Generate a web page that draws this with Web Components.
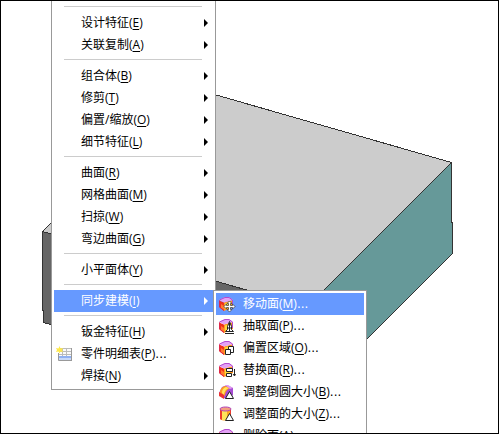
<!DOCTYPE html>
<html lang="zh-CN">
<head>
<meta charset="utf-8">
<title>插入菜单</title>
<style>
html, body { margin: 0; height: 100%; }
body { font: 12px/22px "Open Sans", "Noto Sans CJK SC", sans-serif; color: #000; }
</style>
</head>
<body>
<cad-window>
  <model-view></model-view>
  <cad-menu slot="menu" class="main" aria-label="插入">
    <menu-line></menu-line>
    <menu-entry label="设计特征" key="E" more></menu-entry>
    <menu-entry label="关联复制" key="A" more></menu-entry>
    <menu-line></menu-line>
    <menu-entry label="组合体" key="B" more></menu-entry>
    <menu-entry label="修剪" key="T" more></menu-entry>
    <menu-entry label="偏置/缩放" key="O" more></menu-entry>
    <menu-entry label="细节特征" key="L" more></menu-entry>
    <menu-line></menu-line>
    <menu-entry label="曲面" key="R" more></menu-entry>
    <menu-entry label="网格曲面" key="M" more></menu-entry>
    <menu-entry label="扫掠" key="W" more></menu-entry>
    <menu-entry label="弯边曲面" key="G" more></menu-entry>
    <menu-line></menu-line>
    <menu-entry label="小平面体" key="Y" more></menu-entry>
    <menu-line></menu-line>
    <menu-entry label="同步建模" key="I" more active>
      <cad-menu class="sub" aria-label="同步建模">
        <menu-entry label="移动面" key="M" dots icon="move" active></menu-entry>
        <menu-entry label="抽取面" key="P" dots icon="pull"></menu-entry>
        <menu-entry label="偏置区域" key="O" dots icon="offset"></menu-entry>
        <menu-entry label="替换面" key="R" dots icon="replace"></menu-entry>
        <menu-entry label="调整倒圆大小" key="B" dots icon="blend"></menu-entry>
        <menu-entry label="调整面的大小" key="Z" dots icon="resize"></menu-entry>
        <menu-entry label="删除面" key="A" dots icon="delete"></menu-entry>
      </cad-menu>
    </menu-entry>
    <menu-line></menu-line>
    <menu-entry label="钣金特征" key="H" more></menu-entry>
    <menu-entry label="零件明细表" key="P" dots icon="table"></menu-entry>
    <menu-entry label="焊接" key="N" more></menu-entry>
  </cad-menu>
</cad-window>
<script>
const build = (host, html) => {
  const t = document.createElement('template');
  t.innerHTML = html;
  const root = host.attachShadow({ mode: 'open' });
  root.append(t.content.cloneNode(true));
  return root;
};

const cube = `
  <path d="M1 5.500 6 7.500V16l-5-4z" fill="#f0301c"/>
  <path d="M3 9l3 2v4l-3-2z" fill="#ff7a2e"/>
  <path d="M6 7.500 15 5v7l-9 4z" fill="#ff9a1c"/>
  <path d="M7 8.500 12 7v5l-5 2z" fill="#ffd83c"/>
  <path d="M1 5 7 2h4l4 3-9 2.500z" fill="#e3a2f5"/>
  <path d="M1.500 5 7 2.500h4L14.500 5v6" fill="none" stroke="#b44ad0"/>
  <path d="M1.500 5.500v6.500L6 15.500" fill="none" stroke="#e02848"/>`;
const glyph = (d, fill = '#fff') => `<path d="${d}" fill="${fill}" stroke="#222"/>`;
const icons = {
  move: cube + `<path d="M11.500 6l2.500 2.500h-1.500v2h2V9L17 11.500 14.500 14v-1.500h-2v2H14L11.500 17 9 14.500h1.500v-2h-2V14L6 11.500 8.500 9v1.500h2v-2H9z" fill="#fff" stroke="#444" stroke-width=".8"/>`,
  pull: cube + glyph('M11.500 4.500 13.500 9.500v3l2 2h-8l2-2v-3z') + '<path d="M11.500 6v8M9 11h5M7 16.500h9" stroke="#222" fill="none"/>',
  offset: cube + glyph('M10.500 7.500h5v6h-5z') + glyph('M7.500 10.500h5v5h-5z'),
  replace: cube + glyph('M8.500 7.500h6v3h-6zM8.500 12.500h5v3h-5z') + '<path d="M16.500 8v6M15 13l1.500 2 1-2" stroke="#222" fill="none"/>',
  blend: `<path d="M1 10 4 4l5-2 6 3v7l-5 4-5-1z" fill="#a64bd4"/><path d="M2 10c0-4 2-6 5-7l6 2c-4 1-6 4-6 8z" fill="#ff9b20"/><path d="M4 10c0-3 1-5 4-6l3 1C8 6 6 9 6 12z" fill="#ffe45c"/><path d="M1 9l5 3v4l-5-3z" fill="#ee3430"/><path d="M7 2h3l5 3-3 1z" fill="#df9af0"/>` + glyph('M11.500 8.500 15.500 15.500h-8z'),
  resize: `<path d="M2 4v10c2 2 9 2 11 0V4z" fill="#ffa720"/><path d="M4 5h5v10H4z" fill="#ffe35a"/><path d="M2 4v10l2 1V5zM12 5h1v9h-1z" fill="#ed3b2d"/><ellipse cx="7.500" cy="4" rx="5.500" ry="2" fill="#f3a080" stroke="#b040b8"/>` + glyph('M11.500 8.500 15.500 15.500h-8z'),
  delete: cube + '<path d="M8 9l7 7M15 9l-7 7" stroke="#222" stroke-width="2"/>',
  table: `<path d="M3 3h13v12H3z" fill="#fafafa"/><path d="M3 11h13v2H3z" fill="#8fb0f2"/><path d="M3 13h13v2H3z" fill="#c7d8fa"/><path d="M3 3.500h13M3 6.500h13M3 9.500h13M6.500 3v8M10.500 3v8" stroke="#bbb" fill="none"/><path d="M15.500 3v12M2.500 8v7.500H16" stroke="#999" fill="none"/><path d="M3.500 1l1 2.500 2.500-.5-1 2 1 2-2.500-.5-1 2-1-2-2.500.5 1-2-1-2 2.500.5z" fill="#ffe94a"/>`
};

customElements.define('cad-window', class extends HTMLElement {
  constructor() {
    super();
    build(this, `<style>
      :host { display: block; position: relative; height: 100vh; overflow: hidden; background: #fff; }
      :host::after { content: ""; position: absolute; inset: 0; border: 1px solid #000; pointer-events: none; z-index: 5; }
      ::slotted(cad-menu) { position: absolute; left: 51px; top: 0; }
    </style><slot></slot><slot name="menu"></slot>`);
  }
});

customElements.define('model-view', class extends HTMLElement {
  constructor() {
    super();
    build(this, `<style>
      :host { display: block; height: 100%; }
      svg { display: block; width: 100%; height: 100%; }
    </style>
    <svg viewBox="0 0 499 434" preserveAspectRatio="xMinYMin meet" stroke="#333" shape-rendering="crispEdges" role="img" aria-label="三维实体">
      <path d="M42.500 231.500 190 87.500 451.500 162.500 300.500 313.500z" fill="#ccc"/>
      <path d="M42.500 231.500 304 306.500v91.500L43.500 322.500v-12h-1z" fill="#666"/>
      <path d="M451.500 162.500v60h1v31L304.500 402v-92.500z" fill="#699"/>
    </svg>`);
  }
});

customElements.define('cad-menu', class extends HTMLElement {
  constructor() {
    super();
    build(this, `<style>
      :host { display: block; box-sizing: border-box; background: #fff; border: 1px solid #999; padding: 2px; }
      :host(.main) { min-width: 165px; border-top: 0; padding-top: 3px; }
      :host(.sub) { min-width: 154px; }
    </style><div role="menu"><slot></slot></div>`);
  }
});

customElements.define('menu-line', class extends HTMLElement {
  constructor() {
    super();
    build(this, `<style>
      :host { display: block; padding: 3px 11px 5px 10px; }
      hr { margin: 0; border: 0; height: 1px; background: #ccc; }
    </style><hr>`);
  }
});

customElements.define('menu-entry', class extends HTMLElement {
  constructor() {
    super();
    const a = n => this.getAttribute(n);
    const icon = a('icon') ? `<svg viewBox="0 0 18 18" aria-hidden="true">${icons[a('icon')]}</svg>` : '';
    build(this, `<style>
      :host { display: block; position: relative; }
      button { display: grid; grid-template-columns: 18px 1fr 4px; column-gap: 7px; align-items: center;
        width: 100%; height: 22px; margin: 0; padding: 0 5px 0 2px; border: 0; background: none;
        font: inherit; color: inherit; text-align: left; white-space: nowrap; }
      :host([active]) > button, :host([active]) button { background: #69f; color: #fff; }
      svg { display: block; width: 18px; height: 18px; }
      .arrow { width: 4px; height: 8px; background: currentColor; clip-path: polygon(0 0, 100% 50%, 0 100%); }
      .dots { font-family: "DejaVu Sans", sans-serif; }
      u { text-underline-offset: 2px; }
      ::slotted(cad-menu) { position: absolute; left: 100%; top: 0; z-index: 2; }
    </style>
    <button type="button" role="menuitem"><span>${icon}</span><span>${a('label')}(<u>${a('key')}</u>)${this.hasAttribute('dots') ? '<span class="dots">...</span>' : ''}</span>${this.hasAttribute('more') ? '<span class="arrow"></span>' : ''}</button><slot></slot>`);
  }
});
</script>
</body>
</html>
